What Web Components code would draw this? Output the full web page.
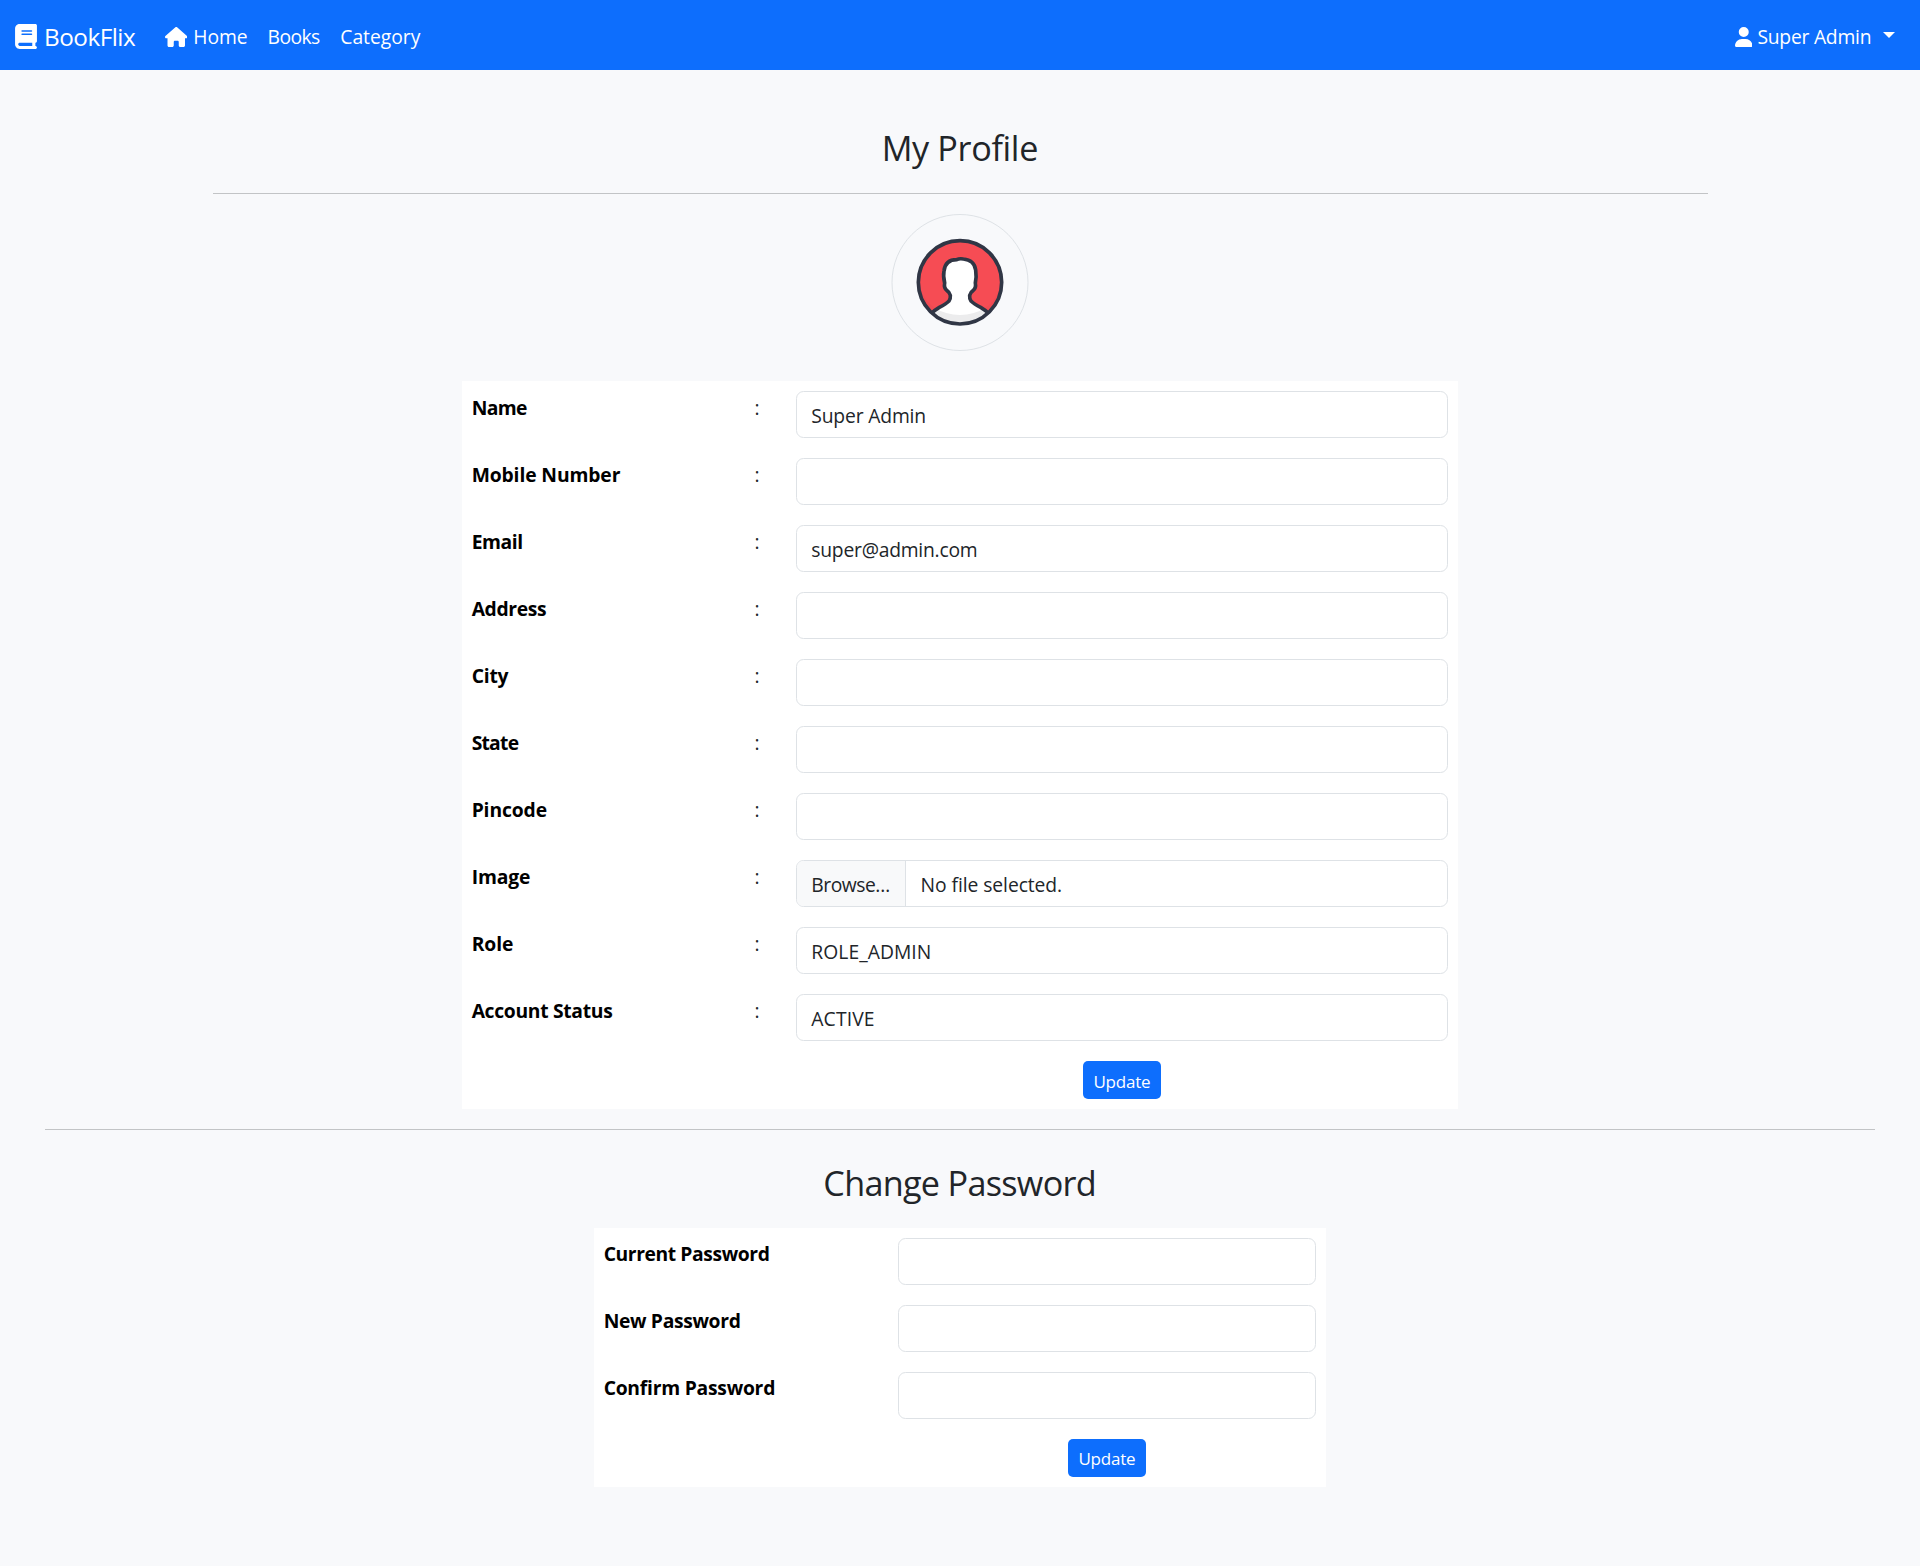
<!DOCTYPE html>
<html lang="en">
<head>
<meta charset="utf-8">
<title>BookFlix</title>
<style>
html,body{margin:0;background:#f8f9fb}
body{font-family:"Open Sans","Noto Sans",sans-serif;font-size:19.3px;color:#212529;min-height:1566px}
</style>
</head>
<body>
<profile-page></profile-page>
<script>
const define=(name,html,ready)=>customElements.define(name,class extends HTMLElement{
  constructor(){super();this.attachShadow({mode:'open'}).innerHTML=typeof html==='function'?'':html;}
  connectedCallback(){
    if(typeof html==='function')this.shadowRoot.innerHTML=html(this);
    if(ready)ready(this);
  }
});

/* Text whose tracking is set so that its ink spans the width in "w". */
define('fit-text','<style>:host{display:inline-block;white-space:nowrap;font-variant-ligatures:none}</style><slot></slot>',el=>{
  const cs=getComputedStyle(el),c=document.createElement('canvas').getContext('2d');
  c.font=`${cs.fontWeight} ${cs.fontSize} ${cs.fontFamily}`;
  const t=el.textContent,m=c.measureText(t);
  const ls=(parseFloat(el.getAttribute('w'))-m.actualBoundingBoxLeft-m.actualBoundingBoxRight)/(t.length-1);
  el.style.letterSpacing=ls.toFixed(3)+'px';
  el.style.marginRight=(-ls).toFixed(3)+'px';
});

const icons={
  book:['0 0 448 512','M96 0C43 0 0 43 0 96V416c0 53 43 96 96 96H384h32c17.700 0 32-14.300 32-32s-14.300-32-32-32V384c17.700 0 32-14.300 32-32V32c0-17.700-14.300-32-32-32H384 96zm0 384H352v64H96c-17.700 0-32-14.300-32-32s14.300-32 32-32zm32-240c0-8.800 7.200-16 16-16H336c8.800 0 16 7.200 16 16s-7.200 16-16 16H144c-8.800 0-16-7.200-16-16zm16 48H336c8.800 0 16 7.200 16 16s-7.200 16-16 16H144c-8.800 0-16-7.200-16-16s7.200-16 16-16z'],
  house:['0 0 576 512','M575.800 255.500c0 18-15 32.100-32 32.100h-32l.7 160.200c0 2.700-.2 5.400-.5 8.100V472c0 22.100-17.900 40-40 40H456c-1.100 0-2.200 0-3.300-.1c-1.400 .1-2.800 .1-4.200 .1H416 392c-22.100 0-40-17.900-40-40V448 384c0-17.700-14.300-32-32-32H256c-17.700 0-32 14.300-32 32v64 24c0 22.100-17.900 40-40 40H160 128.100c-1.500 0-3-.1-4.500-.2c-1.200 .1-2.400 .2-3.600 .2H104c-22.100 0-40-17.900-40-40V360c0-.9 0-1.900 .1-2.800V287.600H32c-18 0-32-14-32-32.100c0-9 3-17 10-24L266.400 8c7-7 15-8 22-8s15 2 21 7L564.800 231.500c8 7 12 15 11 24z'],
  user:['0 0 448 512','M224 256A128 128 0 1 0 224 0a128 128 0 1 0 0 256zm-45.700 48C79.800 304 0 383.800 0 482.300C0 498.700 13.300 512 29.700 512H418.300c16.400 0 29.700-13.300 29.700-29.700C448 383.800 368.200 304 269.700 304H178.300z']
};
define('app-icon',el=>{const[v,d]=icons[el.getAttribute('name')];
  return `<style>:host{display:block}svg{display:block;width:100%;height:100%;fill:currentColor}</style><svg viewBox="${v}"><path d="${d}"/></svg>`;});

define('nav-bar',`<style>
:host{display:flex;height:70px;box-sizing:border-box;background:#0d6efd;color:#fff;padding:0 25px 0 15px;justify-content:space-between}
.side{display:flex}
.item{display:flex;align-items:center;gap:6px}
.item>fit-text{padding-top:3px;line-height:67px}
.brand{font-size:24.3px;margin-right:29px;gap:7px}
.brand app-icon{width:22px;height:25px;margin-top:3px}
.home app-icon{width:22.5px;height:20px;margin-top:3px}
.books{margin-left:20px}.cat{margin-left:20px}
.user{gap:5px}
.user app-icon{width:17.5px;height:20px;margin-top:3px}
.caret{border:6px solid transparent;border-top-color:#fff;border-bottom:0;margin-left:6.500px}
</style>
<div class="side">
<div class="item brand"><app-icon name="book"></app-icon><fit-text w="90">BookFlix</fit-text></div>
<div class="item home"><app-icon name="house"></app-icon><fit-text w="52.500">Home</fit-text></div>
<div class="item books"><fit-text w="51.500">Books</fit-text></div>
<div class="item cat"><fit-text w="79.500">Category</fit-text></div>
</div>
<div class="side"><div class="item user"><app-icon name="user"></app-icon><fit-text w="113.300">Super Admin</fit-text><span class="caret"></span></div></div>`);

define('section-title',`<style>:host{display:block;text-align:center;font-size:34.2px;line-height:46px}</style><slot></slot>`);

define('user-avatar',`<style>:host{display:block;width:138px;height:137px}svg{display:block}</style>
<svg width="138" height="137" viewBox="93 312 414 411">
<defs>
<clipPath id="disc"><circle cx="300" cy="517" r="125"/></clipPath>
<clipPath id="body"><path d="M212 612L240 591H360L388 612V660H212Z"/></clipPath>
</defs>
<circle cx="300" cy="517.500" r="204" fill="none" stroke="#dee2e6" stroke-width="3"/>
<g clip-path="url(#disc)">
<circle cx="300" cy="517" r="125" fill="#f64c54"/>
<path d="M170 480Q180 612 300 616Q420 612 430 480V660H170Z" fill="#f04a52"/>
<path d="M212 612Q224 600 238 592Q258 582 267 573Q272 567 271 556Q269 547 261 542Q251 534 254 519Q249 498 252 483Q256 449 290 449Q298 445 310 447Q343 450 347 480Q350 500 346 519Q349 534 339 542Q331 547 329 556Q328 567 333 573Q342 582 362 592Q376 600 388 612V660H212Z" fill="#fff"/>
<path d="M212 587Q255 615 300 615Q345 615 388 587V660H212Z" fill="#ececed" clip-path="url(#body)"/>
<path d="M212 612Q224 600 238 592Q258 582 267 573Q272 567 271 556Q269 547 261 542Q251 534 254 519Q249 498 252 483Q256 449 290 449Q298 445 310 447Q343 450 347 480Q350 500 346 519Q349 534 339 542Q331 547 329 556Q328 567 333 573Q342 582 362 592Q376 600 388 612" fill="none" stroke="#303645" stroke-width="11" stroke-linejoin="round"/>
</g>
<circle cx="300" cy="517" r="125" fill="none" stroke="#303645" stroke-width="11"/>
</svg>`);

define('text-box',`<style>
:host{display:flex;box-sizing:border-box;height:47px;border:1px solid #dee2e6;border-radius:7.500px;background:#fff;overflow:hidden;line-height:43px}
.v{padding:2px 14px 0 14.300px}
::slotted([slot=button]){background:#f8f9fa;border-right:1px solid #dee2e6;width:94px;padding:2px 0 0 14.300px}
</style><slot name="button"></slot><div class="v"><slot></slot></div>`);

define('form-row',`<style>
:host{display:flex;height:67px;box-sizing:border-box;padding:10px}
.l{width:var(--label-w);font-weight:700;color:#000;line-height:var(--label-lh);flex:none;text-indent:-.2px}
.c{width:var(--colon-w);line-height:33px;flex:none}
.f{flex:1}
</style><div class="l"><slot name="label"></slot></div><div class="c"><slot name="sep"></slot></div><div class="f"><slot></slot></div>`);

define('update-button',`<style>
:host{display:block;box-sizing:border-box;width:78px;height:38px;border-radius:5px;background:#0d6efd;color:#fff;font-size:17px;text-align:center;line-height:var(--button-lh);padding-top:3px}
</style><fit-text w="55.500">Update</fit-text>`);

define('form-card',`<style>
:host{display:block;background:#fff;box-sizing:border-box}
.foot{height:58px;box-sizing:border-box;padding:0 10px 10px calc(10px + var(--foot-l));display:flex;align-items:flex-end;justify-content:center}
</style><slot></slot><div class="foot"><update-button></update-button></div>`);

const t=(s,w)=>s?`<fit-text w="${w}">${s}</fit-text>`:'';
const row=(l,w,content='')=>`<form-row><span slot="label">${t(l,w)}</span><span slot="sep">:</span><text-box>${content}</text-box></form-row>`;
const pw=(l,w)=>`<form-row><span slot="label">${t(l,w)}</span><text-box></text-box></form-row>`;

define('profile-page',`<style>
:host{display:flex;flex-direction:column;align-items:center}
nav-bar{align-self:stretch}
.rule{height:1px;background:#c2c4c6}
.r1{width:1495px;margin:22px 0 20px}
.r2{width:1830px;margin-top:20px}
.t1{margin-top:55px}
.t2{margin-top:30px}
.one{--label-w:282.500px;--colon-w:41.500px;--foot-l:324px;--label-lh:33px;--button-lh:35px;width:996px;margin-top:30px}
.two{--label-w:294px;--colon-w:0px;--foot-l:294px;--label-lh:31px;--button-lh:33px;width:732px;margin-top:22px}
</style>
<nav-bar></nav-bar>
<section-title class="t1">${t('My Profile',152.5)}</section-title>
<div class="rule r1"></div>
<user-avatar></user-avatar>
<form-card class="one">
${row('Name',54.5,t('Super Admin',114))}
${row('Mobile Number',148)}
${row('Email',49.5,t('super@admin.com',165.5))}
${row('Address',74.5)}
${row('City',36)}
${row('State',47)}
${row('Pincode',74)}
${row('Image',57.5,`<span slot="button">${t('Browse…',77)}</span>${t('No file selected.',139.5)}`)}
${row('Role',40.5,t('ROLE_ADMIN',117.5))}
${row('Account Status',140.5,t('ACTIVE',62.5))}
</form-card>
<div class="rule r2"></div>
<section-title class="t2">${t('Change Password',268.5)}</section-title>
<form-card class="two">
${pw('Current Password',164)}
${pw('New Password',135)}
${pw('Confirm Password',169.5)}
</form-card>`);
</script>
</body>
</html>
